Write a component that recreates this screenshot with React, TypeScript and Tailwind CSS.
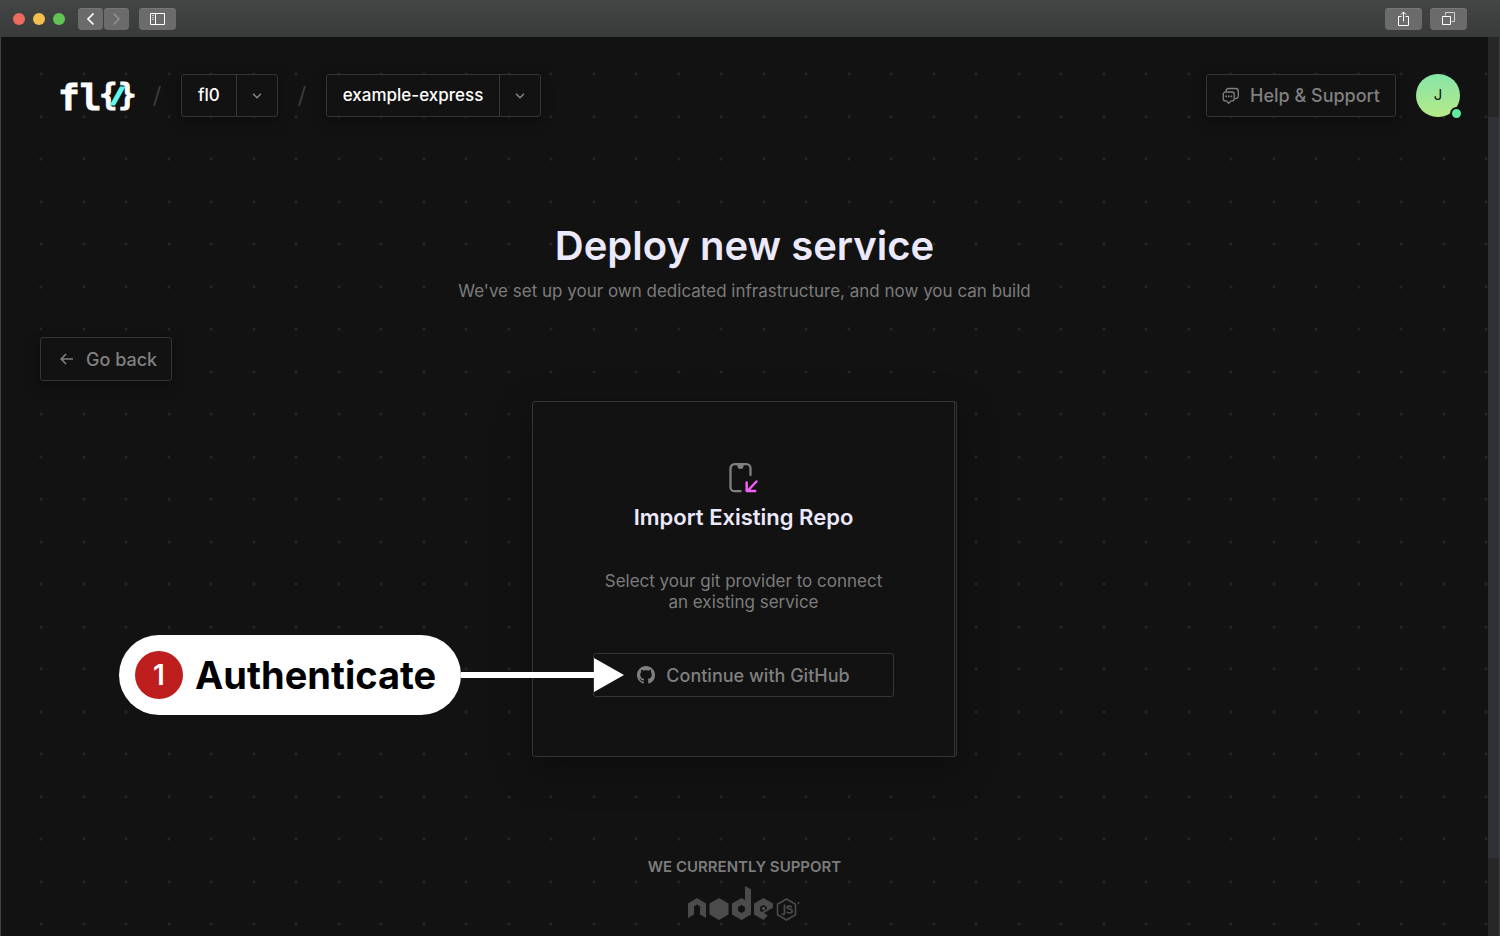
import React from "react";

const outline = "rounded-[3px] border border-[#353535] bg-[#121212] shadow-[0_4px_14px_rgba(0,0,0,0.35)]";
const chromeButton = "flex h-[22px] items-center justify-center rounded bg-[#6b6b6b] shadow-[inset_0_1px_0_#777777]";

function WindowBar() {
  return (
    <div className="flex h-[37px] items-center bg-linear-to-b from-[#444645] to-[#393b3a] pl-[13px] pr-[33px]">
      <div className="flex gap-2">
        <span className="size-3 rounded-full bg-[#ed6a5e]" />
        <span className="size-3 rounded-full bg-[#f5bf4f]" />
        <span className="size-3 rounded-full bg-[#61c554]" />
      </div>
      <div className="ml-[13px] flex gap-px">
        <button aria-label="Back" className={`${chromeButton} w-[25px]`}>
          <svg width="9" height="14" viewBox="0 0 9 14" fill="none" stroke="#fff" strokeWidth="1.7"><path d="M7.500 1.500 2 7l5.500 5.500" /></svg>
        </button>
        <button aria-label="Forward" className={`${chromeButton} w-[25px]`}>
          <svg width="9" height="14" viewBox="0 0 9 14" fill="none" stroke="#919191" strokeWidth="1.500"><path d="M1.500 1.500 7 7l-5.500 5.500" /></svg>
        </button>
      </div>
      <button aria-label="Sidebar" className={`${chromeButton} ml-[10px] w-[37px]`}>
        <svg width="15" height="12" viewBox="0 0 15 12" fill="none" stroke="#fff"><path d="M.5.5h14v11H.5zM5.500.5v11" /><path stroke="#c4c4c4" d="M2 2.500h2M2 4.500h2M2 6.500h2" /></svg>
      </button>
      <div className="ml-auto flex gap-2">
        <button aria-label="Share" className={`${chromeButton} w-[37px]`}>
          <svg width="11" height="16" viewBox="0 0 11 16" fill="none" stroke="#fff"><path d="M3.500 5.500h-3v9h10v-9h-3M5.500 10.500V1M3 3.500 5.500 1 8 3.500" /></svg>
        </button>
        <button aria-label="Tabs" className={`${chromeButton} w-[37px]`}>
          <svg width="13" height="13" viewBox="0 0 13 13" fill="none" stroke="#fff"><path d="M.5 4.500h8v8h-8z" /><path stroke="#d0d0d0" d="M3.500 3.500v-3h9v9h-3" /></svg>
        </button>
      </div>
    </div>
  );
}

function Logo() {
  return (
    <svg width="86" height="52" viewBox="-6 -8 86 52" aria-label="fl0" fill="#fff" stroke="#fff" strokeWidth="0.8" fontFamily="'DejaVu Sans Mono', monospace" fontWeight="700">
      <text x="-2" y="32" fontSize="36">fl</text>
      <text x="39" y="27" fontSize="31">{"{"}</text>
      <text x="58" y="27" fontSize="31">{"}"}</text>
      <path fill="#5df5ec" stroke="none" d="M60 8.500h5.500L55 27.500h-5.500z" />
    </svg>
  );
}

function Slash({ className }: { className: string }) {
  return <svg className={className} width="8" height="20" viewBox="0 0 8 20" stroke="#393939" strokeWidth="2"><path d="M7 0 1 20" /></svg>;
}

function Picker({ name }: { name: string }) {
  return (
    <div className={`${outline} flex h-[43px] items-stretch`}>
      <button className="px-4 pt-px text-[17px] font-medium text-white">{name}</button>
      <button aria-label={`Choose ${name}`} className="flex w-[41px] items-center justify-center border-l border-[#353535]">
        <svg width="10" height="6" viewBox="0 0 10 6" fill="none" stroke="#8a8a8a" strokeWidth="1.400"><path d="m1 .7 4 4 4-4" /></svg>
      </button>
    </div>
  );
}

function Header() {
  return (
    <header className="flex h-[43px] items-center pl-[53px] pr-7">
      <Logo />
      <Slash className="ml-[13px] mr-5" />
      <Picker name="fl0" />
      <Slash className="mx-5" />
      <Picker name="example-express" />
      <button className={`${outline} ml-auto flex h-[43px] items-center gap-[10px] px-[15px] text-[18px] font-medium text-[#808080]`}>
        <svg width="18" height="18" viewBox="0 0 18 18" fill="none" stroke="#808080" strokeWidth="1.300" strokeLinejoin="round">
          <path d="M3.500 5h6.500a2.200 2.200 0 0 1 2.200 2.200v4.500a2.200 2.200 0 0 1-2.200 2.200h-.9L6.700 16.300l-2.400-2.400h-.8a2.200 2.200 0 0 1-2.200-2.200V7.200A2.200 2.200 0 0 1 3.500 5Z" />
          <path d="M4 4.500C4 2.500 4.800 1.500 7 1.500h6.500a2.800 2.800 0 0 1 2.800 2.800v4.500c0 1.900-1 2.900-3.300 2.900" />
          <path strokeWidth="1.700" d="M3.400 9.400H5M6 9.400h1.600M8.600 9.400h1.600" />
        </svg>
        Help &amp; Support
      </button>
      <button className="relative ml-5 flex h-[43px] w-11 items-center justify-center rounded-full bg-linear-to-b from-[#86e5a8] to-[#b5ea88] text-[15px] text-[#121212]">
        J
        <span className="absolute -bottom-[3px] -right-[3px] size-[13px] rounded-full border-2 border-[#121212] bg-[#60eb9f]" />
      </button>
    </header>
  );
}

function Callout() {
  return (
    <div className="absolute right-[270px] -top-[18px] flex items-center">
      <div className="flex h-20 w-[342px] items-center gap-3 rounded-full bg-white pl-4">
        <span className="flex size-12 items-center justify-center rounded-full bg-[#be1e1e] text-[28px] font-semibold text-white">1</span>
        <span className="text-[38px] font-bold text-black">Authenticate</span>
      </div>
      <svg width="163" height="34" viewBox="0 0 163 34" fill="#fff"><path d="M0 14h133V0l30 17-30 17V20H0z" /></svg>
    </div>
  );
}

function ImportCard() {
  return (
    <section className="mt-5 w-[425px] self-center rounded-[3px] border border-[#353535] bg-[#121212] pr-px shadow-[0_12px_40px_rgba(0,0,0,0.3)]">
      <div className="flex h-[354px] flex-col items-center border-r border-[#353535] pt-[60px]">
        <svg width="34" height="32" viewBox="0 0 34 32" fill="none" strokeLinecap="round" strokeLinejoin="round">
          <path stroke="#808080" strokeWidth="2.300" d="M13.500 29.200H7.500a4 4 0 0 1-4-4V6.200a4 4 0 0 1 4-4h12a4 4 0 0 1 4 4V13" />
          <path fill="#808080" d="M9 2h9c-.9 0-1.300 1-1.400 2-.2 2-1.100 3-3.100 3s-2.900-1-3.100-3C10.300 3 9.900 2 9 2Z" />
          <path stroke="#f35ff0" strokeWidth="2.500" d="m29.500 19.500-8.500 9M19.700 20.500v8.500h8.500" />
        </svg>
        <h2 className="mt-[7px] text-[22px] leading-8 font-semibold text-[#ebe9fb]">Import Existing Repo</h2>
        <p className="mt-[38px] text-center text-[17px] leading-[21px] text-[#7c7c7c]">Select your git provider to connect<br />an existing service</p>
        <div className="relative mt-10">
          <button className="flex h-11 w-[301px] items-center justify-center gap-[11px] rounded-[3px] border border-[#353535] text-[18px] font-medium text-[#808080]">
            <svg width="18" height="18" viewBox="0 0 16 16" fill="currentColor"><path d="M8 0C3.580 0 0 3.580 0 8c0 3.540 2.290 6.530 5.470 7.590.4.070.55-.17.55-.38 0-.19-.01-.82-.01-1.490-2.010.37-2.530-.49-2.690-.94-.09-.23-.48-.94-.82-1.130-.28-.15-.68-.52-.01-.53.63-.01 1.080.58 1.230.82.72 1.210 1.870.87 2.330.66.070-.52.28-.87.51-1.070-1.780-.2-3.640-.89-3.640-3.950 0-.87.31-1.590.82-2.150-.08-.2-.36-1.020.08-2.120 0 0 .67-.21 2.200.82.64-.18 1.320-.27 2-.27s1.360.09 2 .27c1.530-1.040 2.200-.82 2.200-.82.44 1.100.16 1.920.08 2.120.51.56.82 1.270.82 2.150 0 3.070-1.870 3.750-3.650 3.950.29.25.54.73.54 1.480 0 1.070-.01 1.930-.01 2.200 0 .21.15.46.55.38A8.010 8.010 0 0 0 16 8c0-4.420-3.580-8-8-8Z" /></svg>
            Continue with GitHub
          </button>
          <Callout />
        </div>
      </div>
    </section>
  );
}

function NodeLogo() {
  return (
    <svg width="114" height="36" viewBox="0 0 114 36" fill="#4b4b4b" aria-label="Node.js">
      <path d="M0 17.500 9 12l9 5.500V32l-6-3.500V20.500L9 18.500l-3 2v8L0 32z" />
      <path d="m31 12 9.500 5.500v11L31 34l-9.500-5.500v-11z" />
      <path fillRule="evenodd" d="M57 0l6 3.200v25.300L53.500 34 44 28.500v-11l9.500-5.500 3.500 2zM53.500 19l-3.400 2v4l3.400 2 3.400-2v-4z" />
      <path fillRule="evenodd" d="m75.500 12 9.500 5.500v4.200L76 27l3.800 2.300-4.300 4.700-9.500-5.500v-11zM75.500 19l-3.400 2v4l1.700 1 5.100-3v-2z" />
      <circle cx="75.500" cy="22.500" r="1.800" />
      <path fill="none" stroke="#4b4b4b" strokeWidth="1.600" d="m98.500 13 9 5.200v10.600l-9 5.200-9-5.200V18.200z" />
      <path fill="none" stroke="#4b4b4b" strokeWidth="1.700" d="M96.500 18.500v8.500q0 2.200-3 1M104 20.700q-5-1.600-5 .6c0 2.200 5.200.9 5.200 3.700 0 2.600-4.300 2.300-5.600.8" />
      <circle cx="110.500" cy="17" r="1" />
    </svg>
  );
}

export default function App() {
  return (
    <div className="flex min-h-screen flex-col bg-[#121212] font-['Inter',sans-serif]">
      <WindowBar />
      <div className="flex grow border-x border-[#414342]">
        <main className="flex grow flex-col bg-[radial-gradient(circle_at_40px_37px,#262626_1px,transparent_2px),radial-gradient(circle_at_83px_37px,#262626_1px,transparent_2px),radial-gradient(circle_at_40px_80px,#262626_1px,transparent_2px),radial-gradient(circle_at_83px_80px,#262626_1px,transparent_2px)] bg-size-[85px_85px] pt-[37px]">
          <Header />
          <div className="mt-[105px] text-center">
            <h1 className="text-[40px] leading-12 font-semibold text-[#ebe9fb]">Deploy new service</h1>
            <p className="mt-[9px] text-[17px] leading-6 text-[#7c7c7c]">We've set up your own dedicated infrastructure, and now you can build</p>
          </div>
          <button className={`${outline} ml-[39px] mt-[34px] flex h-11 items-center gap-[13px] self-start pl-[19px] pr-[14px] text-[18px] font-medium text-[#808080]`}>
            <svg width="13" height="12" viewBox="0 0 13 12" fill="none" stroke="currentColor" strokeWidth="1.600"><path d="M13 6H1.500M6 1 1.200 6 6 11" /></svg>
            Go back
          </button>
          <ImportCard />
          <footer className="mt-[100px] flex flex-col items-center pb-3">
            <p className="text-[15px] leading-5 font-semibold text-[#7c7c7c]">WE CURRENTLY SUPPORT</p>
            <div className="mt-[9px]"><NodeLogo /></div>
          </footer>
        </main>
        <div className="flex w-[11px] flex-col bg-[#272727] pb-[78px] pt-20">
          <div className="grow bg-[#303136]" />
        </div>
      </div>
    </div>
  );
}
